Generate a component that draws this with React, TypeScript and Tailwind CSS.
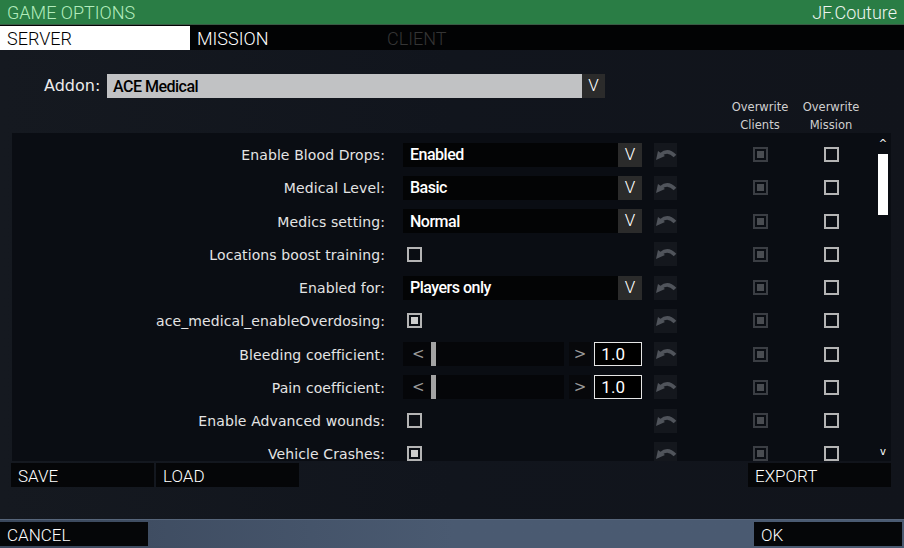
import React from 'react'

type Row =
  | { label: string; kind: 'select'; value: string }
  | { label: string; kind: 'check'; checked: boolean }
  | { label: string; kind: 'slider'; value: string }

const rows: Row[] = [
  { label: 'Enable Blood Drops:', kind: 'select', value: 'Enabled' },
  { label: 'Medical Level:', kind: 'select', value: 'Basic' },
  { label: 'Medics setting:', kind: 'select', value: 'Normal' },
  { label: 'Locations boost training:', kind: 'check', checked: false },
  { label: 'Enabled for:', kind: 'select', value: 'Players only' },
  { label: 'ace_medical_enableOverdosing:', kind: 'check', checked: true },
  { label: 'Bleeding coefficient:', kind: 'slider', value: '1.0' },
  { label: 'Pain coefficient:', kind: 'slider', value: '1.0' },
  { label: 'Enable Advanced wounds:', kind: 'check', checked: false },
  { label: 'Vehicle Crashes:', kind: 'check', checked: true },
]

function ResetIcon() {
  return (
    <div className="flex h-[24px] w-[23px] items-center justify-center bg-[#14171d]">
      <svg width="22" height="14" viewBox="0 0 22 14">
        <polygon points="1,12 3,3 10,8" fill="#50545b" />
        <path d="M6 6.5 Q13 0.5 20 8" stroke="#50545b" strokeWidth="3.6" fill="none" />
      </svg>
    </div>
  )
}

function Check({ checked, tone = 'light' }: { checked: boolean; tone?: 'light' | 'dim' }) {
  const box = tone === 'light' ? 'border-[#b4b4b4]' : 'border-[#3b3e44]'
  const fill = tone === 'light' ? 'bg-[#cdcdcd]' : 'bg-[#494c51]'
  return (
    <div className={`flex h-[15px] w-[15px] items-center justify-center border-2 ${box}`}>
      {checked && <div className={`h-[7px] w-[7px] ${fill}`} />}
    </div>
  )
}

function Control({ row }: { row: Row }) {
  if (row.kind === 'select') {
    return (
      <div className="flex h-[24px] w-[239px]">
        <div className="flex flex-1 items-center bg-[#030405] pl-[7px] pt-[1px] font-['Roboto',sans-serif] text-[16px] font-medium tracking-[-0.5px] text-white">
          {row.value}
        </div>
        <div className="flex w-[24px] items-center justify-center bg-[#2b2b2b] font-['Roboto',sans-serif] text-[17px] font-light text-white">
          V
        </div>
      </div>
    )
  }
  if (row.kind === 'check') {
    return (
      <div className="flex h-[24px] w-[239px] items-center pl-[4px]">
        <Check checked={row.checked} />
      </div>
    )
  }
  return (
    <div className="flex h-[24px] w-[239px]">
      <div className="flex w-[162px] items-center bg-[#050609]">
        <span className="w-[28px] pl-[9px] font-['DejaVu_Sans',sans-serif] text-[15px] text-[#9a9a9a]">&lt;</span>
        <div className="h-[24px] w-[5px] bg-[#a3a3a3]" />
      </div>
      <div className="ml-[5px] flex w-[23px] items-center justify-center bg-[#07080b] font-['DejaVu_Sans',sans-serif] text-[15px] text-[#9a9a9a]">
        &gt;
      </div>
      <div className="ml-[3px] flex w-[48px] items-center border border-[#e6e6e6] bg-black pl-[6px] pt-[1px] font-['Roboto',sans-serif] text-[17px] text-white">
        {row.value}
      </div>
    </div>
  )
}

function Btn({ label, w }: { label: string; w: string }) {
  return (
    <div className={`flex h-[24px] ${w} items-center bg-[#050608] pl-[7px] pt-[3px] font-['Roboto',sans-serif] text-[17px] font-light text-white`}>
      {label}
    </div>
  )
}

export default function App() {
  return (
    <div className="flex h-[548px] w-[904px] flex-col overflow-hidden bg-[#11151d]">
      <div className="flex h-[25px] items-center justify-between border-b border-[#3a5a45] bg-[#2a7d45] px-[7px] pt-[1px] font-['Roboto',sans-serif] text-[18px] font-light">
        <span className="text-[#b2ecbc]">GAME OPTIONS</span>
        <span className="text-[#eef4ef]">JF.Couture</span>
      </div>
      <div className="flex h-[25px] bg-[#020304] pt-[1px] font-['Roboto',sans-serif] text-[18px] font-light">
        <div className="flex w-[190px] items-center bg-white pl-[7px] text-black">SERVER</div>
        <div className="flex w-[190px] items-center pl-[7px] text-white">MISSION</div>
        <div className="flex w-[190px] items-center pl-[7px] text-[#353535]">CLIENT</div>
      </div>

      <div className="flex flex-1 flex-col bg-gradient-to-r from-[#151920] via-[#11151d] to-[#11141b]">
        <div className="mt-[24px] flex h-[24px] items-center">
          <span className="w-[107px] pl-[44px] font-['DejaVu_Sans',sans-serif] text-[16px] text-[#ececec]">Addon:</span>
          <div className="flex h-[24px] w-[475px] items-center bg-[#c1c2c4] pl-[6px] pt-[1px] font-['Roboto',sans-serif] text-[16px] font-medium tracking-[-0.5px] text-black">
            ACE Medical
          </div>
          <div className="flex h-[24px] w-[23px] items-center justify-center bg-[#2b2b2b] font-['Roboto',sans-serif] text-[17px] font-light text-white">
            V
          </div>
        </div>

        <div className="flex h-[35px] pl-[725px] font-['DejaVu_Sans',sans-serif] text-[11.5px] leading-[18px] text-[#d0d0d0]">
          <div className="w-[70px] text-center">Overwrite<br />Clients</div>
          <div className="ml-[1px] w-[70px] text-center">Overwrite<br />Mission</div>
        </div>

        <div className="ml-[12px] flex h-[328px] w-[879px] bg-[#0a0d13]">
          <div className="flex-1 overflow-hidden pt-[5px]">
            {rows.map((row) => (
              <div key={row.label} className="flex h-[33.25px] items-center">
                <div className="w-[373px] pt-[2px] text-right font-['DejaVu_Sans',sans-serif] text-[14px] tracking-[0.1px] text-[#e4e4e4]">
                  {row.label}
                </div>
                <div className="ml-[18px]">
                  <Control row={row} />
                </div>
                <div className="ml-[12px]">
                  <ResetIcon />
                </div>
                <div className="ml-[76px]">
                  <Check checked tone="dim" />
                </div>
                <div className="ml-[56px]">
                  <Check checked={false} />
                </div>
              </div>
            ))}
          </div>
          <div className="flex w-[16px] flex-col items-center pt-[4px] pb-[2px] font-['DejaVu_Sans',sans-serif] text-[10px] text-white">
            <span className="h-[14px] leading-[14px]">^</span>
            <div className="mt-[3px] h-[61px] w-[10px] bg-white" />
            <div className="flex-1" />
            <span className="h-[14px] leading-[14px]">v</span>
          </div>
        </div>

        <div className="mt-[2px] flex">
          <div className="ml-[11px]">
            <Btn label="SAVE" w="w-[143px]" />
          </div>
          <div className="ml-[2px]">
            <Btn label="LOAD" w="w-[143px]" />
          </div>
          <div className="ml-[449px]">
            <Btn label="EXPORT" w="w-[143px]" />
          </div>
        </div>
      </div>

      <div className="flex h-[29px] items-end justify-between border-t border-[#56657a] bg-gradient-to-r from-[#3a475b] via-[#4a5a71] to-[#4a5a71] pb-[2px]">
        <Btn label="CANCEL" w="w-[148px]" />
        <div className="mr-[2px]">
          <Btn label="OK" w="w-[148px]" />
        </div>
      </div>
    </div>
  )
}
